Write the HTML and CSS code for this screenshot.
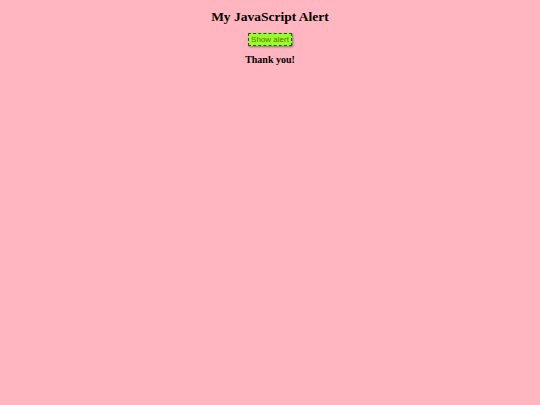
FILE: index.html
```html
<!DOCTYPE html>
<html>
<head>
<meta charset="utf-8">
<link rel="stylesheet" href="styles.css">
</head>
<body class="page">
<h1 class="title">My JavaScript Alert</h1>
<div class="row"><button class="alert-btn">Show alert</button></div>
<p class="thanks">Thank you!</p>
</body>
</html>
```
FILE: styles.css
```css
html, body { margin: 0; padding: 0; }
.page {
  background: #ffb6c1;
  font-family: "Liberation Serif", serif;
  text-align: center;
  padding-top: 9px;
  min-height: 405px;
  box-sizing: border-box;
}
.title {
  font-size: 13.5px;
  font-weight: bold;
  margin: 0 0 8px;
  color: #000;
}
.row { display: flex; justify-content: center; }
.alert-btn {
  font-family: "Liberation Sans", sans-serif;
  font-size: 8px;
  color: #6b6b00;
  background: #94ff2a;
  border: 1px dashed #3a4a10;
  box-shadow: 1px 1px 2px #777;
  padding: 1px 2px;
  margin: 0;
}
.thanks {
  font-size: 10px;
  font-weight: bold;
  margin: 8px 0 0;
}
```
